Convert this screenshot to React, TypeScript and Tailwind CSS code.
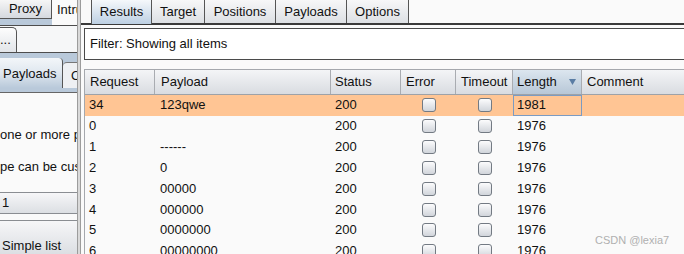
import React from "react"

const rows = [
  { req: "34", payload: "123qwe", status: "200", length: "1981", hit: true },
  { req: "0", payload: "", status: "200", length: "1976" },
  { req: "1", payload: "------", status: "200", length: "1976" },
  { req: "2", payload: "0", status: "200", length: "1976" },
  { req: "3", payload: "00000", status: "200", length: "1976" },
  { req: "4", payload: "000000", status: "200", length: "1976" },
  { req: "5", payload: "0000000", status: "200", length: "1976" },
  { req: "6", payload: "00000000", status: "200", length: "1976" },
]

const tabs = [
  { name: "Results", w: "w-[61px] border-l", active: true },
  { name: "Target", w: "w-[53px]" },
  { name: "Positions", w: "w-[71px]" },
  { name: "Payloads", w: "w-[71px]" },
  { name: "Options", w: "w-[62px]" },
]

function Checkbox() {
  return (
    <span className="block h-[14px] w-[14px] rounded-[3px] border border-[#737a83] bg-gradient-to-b from-[#fcfcfd] to-[#d1d5db]" />
  )
}

// background window, mostly hidden behind the results window
function LeftPanel() {
  return (
    <div className="flex w-[77px] shrink-0 flex-col overflow-hidden whitespace-nowrap">
      <div className="flex h-[25px] items-start bg-[#b9c9da]">
        <div className="flex h-[19px] w-[52px] shrink-0 items-center justify-center border-r border-b border-[#555] bg-gradient-to-b from-[#f6f6f6] to-[#d5d9df]">
          Proxy
        </div>
        <div className="h-[25px] min-w-0 flex-1 overflow-hidden bg-[#fafafa] pl-[5px] leading-[19px]">
          Intru
        </div>
      </div>
      <div className="flex h-[29px] border-y border-[#4d4d4d] bg-[#f6f7f8]">
        <div className="mt-[1px] w-[17px] overflow-hidden rounded-tr-[5px] border-t border-r border-[#555] bg-gradient-to-b from-[#fdfdfd] to-[#e2e5e9] leading-[24px]">
          ...
        </div>
      </div>
      <div className="h-[5px] bg-[#b9c9da]" />
      <div className="flex h-[30px] items-end bg-[#b9c9da]">
        <div className="flex h-[30px] w-[63px] shrink-0 items-center rounded-tr-[4px] border-r border-[#555] bg-gradient-to-b from-[#f3f6f9] via-[#dfe7ef] to-[#b9c9da] pl-[3px]">
          Payloads
        </div>
        <div className="flex h-[26px] min-w-0 flex-1 items-center overflow-hidden rounded-tl-[4px] border-t border-[#777] bg-[#eef0f3] pl-[8px]">
          Op
        </div>
      </div>
      <div className="h-[5px] border-b border-[#666] bg-[#b9c9da]" />
      <div className="flex h-[100px] flex-col gap-[16px] bg-[#fafafa] pt-[34px] leading-[16px]">
        <span className="block w-[77px] overflow-hidden">one or more p</span>
        <span className="block w-[77px] overflow-hidden">pe can be cus</span>
      </div>
      <div className="flex h-[23px] items-center border-y border-[#8a8d92] bg-gradient-to-b from-[#f6f6f8] to-[#dcdfe3] pl-[2px]">
        1
      </div>
      <div className="h-[6px] bg-[#fafafa]" />
      <div className="flex-1 border-t border-[#8a8d92] bg-gradient-to-b from-[#f6f6f8] to-[#dcdfe3] pl-[2px] pt-[17px] leading-[16px]">
        Simple list
      </div>
    </div>
  )
}

export default function App() {
  return (
    <div className="relative flex h-[254px] w-[684px] overflow-hidden bg-[#fafafa] font-['Liberation_Sans',Arial,sans-serif] text-[13px] text-[#111]">
      <LeftPanel />
      <div className="w-[4px] shrink-0 border-x border-[#9c9c9c] bg-[#d9d9d9]" />

      <div className="flex min-w-0 flex-1 flex-col">
        <div className="flex h-[23px] items-start pl-[10px]">
          {tabs.map((t) =>
            t.active ? (
              <div
                key={t.name}
                className={`${t.w} relative z-10 -mb-[1px] flex h-[24px] shrink-0 items-center justify-center border-r border-[#555] bg-gradient-to-b from-[#f5f8fb] to-[#bdd0e3]`}
              >
                {t.name}
              </div>
            ) : (
              <div
                key={t.name}
                className={`${t.w} flex h-[23px] shrink-0 items-center justify-center border-r border-[#555] bg-gradient-to-b from-[#f7f7f8] to-[#dde0e4]`}
              >
                {t.name}
              </div>
            )
          )}
        </div>
        <div className="h-[4px] border-y border-[#3a3a3a] bg-[#bdd0e3]" />

        <div className="flex flex-col pt-[3px] pl-[3px]">
          <div className="flex h-[32px] items-center border border-r-0 border-[#4a4a4a] bg-white pl-[5px]">
            Filter: Showing all items
          </div>

          <div className="mt-[9px] border-t border-l border-[#a5a8ad]">
            <div className="flex h-[25px] border-b border-[#9ea2a8] bg-gradient-to-b from-[#f4f5f7] to-[#d9dce1]">
              <div className="flex w-[70px] items-center border-r border-[#a9acb1] pl-[5px]">Request</div>
              <div className="flex w-[176px] items-center border-r border-[#a9acb1] pl-[6px]">Payload</div>
              <div className="flex w-[70px] items-center border-r border-[#a9acb1] pl-[4px]">Status</div>
              <div className="flex w-[55px] items-center border-r border-[#a9acb1] pl-[5px]">Error</div>
              <div className="flex w-[57px] items-center border-r border-[#a9acb1] pl-[5px]">Timeout</div>
              <div className="flex w-[69px] items-center justify-between border-r border-[#a9acb1] bg-gradient-to-b from-[#dce6ef] to-[#b7c7d7] pr-[5px] pl-[4px]">
                Length
                <svg width="7" height="6" viewBox="0 0 7 6">
                  <polygon points="0,0 7,0 3.5,6" fill="#5a7da4" />
                </svg>
              </div>
              <div className="flex flex-1 items-center pl-[5px]">Comment</div>
            </div>

            {rows.map((r) => (
              <div
                key={r.req}
                className={`flex h-[20.85px] items-center leading-[16px] ${r.hit ? "bg-[#ffc594]" : ""}`}
              >
                <div className="w-[70px] pl-[4px]">{r.req}</div>
                <div className="w-[176px] pl-[5px]">{r.payload}</div>
                <div className="w-[70px] pl-[4px]">{r.status}</div>
                <div className="flex w-[55px] justify-center">
                  <Checkbox />
                </div>
                <div className="flex w-[57px] justify-center">
                  <Checkbox />
                </div>
                <div
                  className={`flex h-full w-[69px] items-center ${
                    r.hit ? "border border-[#7b9bc2] pl-[3px]" : "pl-[4px]"
                  }`}
                >
                  {r.length}
                </div>
                <div className="flex-1" />
              </div>
            ))}
          </div>
        </div>
      </div>

      <span className="absolute top-[232px] left-[595px] text-[11px] leading-[16px] text-[#b0b0b0]">
        CSDN @lexia7
      </span>
    </div>
  )
}
